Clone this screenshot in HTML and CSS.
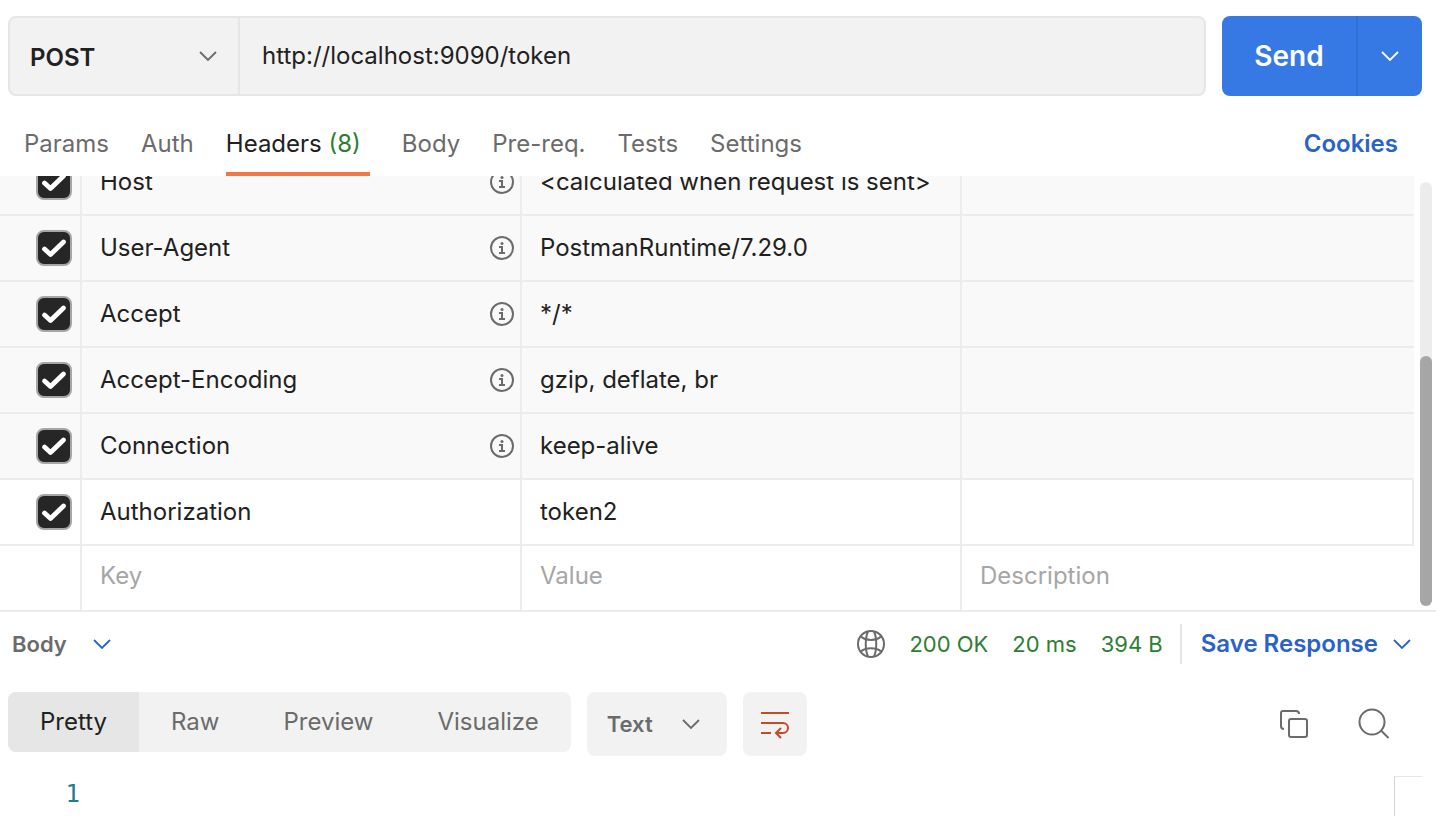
FILE: index.html
```html
<!DOCTYPE html>
<html lang="en">
<head>
    <meta charset="UTF-8">
    <meta name="viewport" content="width=device-width, initial-scale=1.0">
    <title>POST http://localhost:9090/token</title>
    <link rel="stylesheet" href="styles.css">
</head>
<body>
    <!-- Shared icons -->
    <svg class="icon-defs" aria-hidden="true">
        <symbol id="icon-chevron" viewBox="0 0 20 12">
            <path d="M2 2l8 8 8-8" fill="none" stroke="currentColor" stroke-width="1.8"/>
        </symbol>
        <symbol id="icon-check" viewBox="0 0 36 36">
            <path d="M8.500 19l6 5.500L27.500 12" fill="none" stroke="#fff" stroke-width="4.800" stroke-linecap="round" stroke-linejoin="round"/>
        </symbol>
        <symbol id="icon-info" viewBox="0 0 24 24">
            <circle cx="12" cy="12" r="11" fill="none" stroke="currentColor" stroke-width="2"/>
            <path d="M9 11h3v6M9 17h6" fill="none" stroke="currentColor" stroke-width="2"/>
            <circle cx="12" cy="7.500" r="1.500" fill="currentColor"/>
        </symbol>
    </svg>

    <form class="request-bar">
        <div class="url-group">
            <div class="dropdown method">
                <select aria-label="Method">
                    <option>POST</option>
                    <option>GET</option>
                    <option>PUT</option>
                </select>
                <svg class="chevron"><use href="#icon-chevron"/></svg>
            </div>
            <input type="text" class="url" aria-label="Request URL" value="http://localhost:9090/token">
        </div>
        <div class="send-group">
            <button type="button" class="send">Send</button>
            <button type="button" class="send-more" aria-label="More send options">
                <svg class="chevron"><use href="#icon-chevron"/></svg>
            </button>
        </div>
    </form>

    <nav class="tabs">
        <a href="#params">Params</a>
        <a href="#auth">Auth</a>
        <a href="#headers" class="active">Headers <span class="count">(8)</span></a>
        <a href="#body">Body</a>
        <a href="#prereq">Pre-req.</a>
        <a href="#tests">Tests</a>
        <a href="#settings">Settings</a>
        <a href="#cookies" class="cookies">Cookies</a>
    </nav>

    <div class="headers-panel">
        <table class="headers-table">
            <colgroup>
                <col class="col-check">
                <col class="col-key">
                <col class="col-value">
                <col>
            </colgroup>
            <tbody>
                <tr class="auto">
                    <td><label class="check"><input type="checkbox" aria-label="Host" checked><svg><use href="#icon-check"/></svg></label></td>
                    <td><div class="key">Host<svg class="info"><use href="#icon-info"/></svg></div></td>
                    <td>&lt;calculated when request is sent&gt;</td>
                    <td></td>
                </tr>
                <tr class="auto">
                    <td><label class="check"><input type="checkbox" aria-label="User-Agent" checked><svg><use href="#icon-check"/></svg></label></td>
                    <td><div class="key">User-Agent<svg class="info"><use href="#icon-info"/></svg></div></td>
                    <td>PostmanRuntime/7.29.0</td>
                    <td></td>
                </tr>
                <tr class="auto">
                    <td><label class="check"><input type="checkbox" aria-label="Accept" checked><svg><use href="#icon-check"/></svg></label></td>
                    <td><div class="key">Accept<svg class="info"><use href="#icon-info"/></svg></div></td>
                    <td>*/*</td>
                    <td></td>
                </tr>
                <tr class="auto">
                    <td><label class="check"><input type="checkbox" aria-label="Accept-Encoding" checked><svg><use href="#icon-check"/></svg></label></td>
                    <td><div class="key">Accept-Encoding<svg class="info"><use href="#icon-info"/></svg></div></td>
                    <td>gzip, deflate, br</td>
                    <td></td>
                </tr>
                <tr class="auto">
                    <td><label class="check"><input type="checkbox" aria-label="Connection" checked><svg><use href="#icon-check"/></svg></label></td>
                    <td><div class="key">Connection<svg class="info"><use href="#icon-info"/></svg></div></td>
                    <td>keep-alive</td>
                    <td></td>
                </tr>
                <tr class="custom">
                    <td><label class="check"><input type="checkbox" aria-label="Authorization" checked><svg><use href="#icon-check"/></svg></label></td>
                    <td>Authorization</td>
                    <td>token2</td>
                    <td></td>
                </tr>
                <tr class="new">
                    <td></td>
                    <td><input type="text" aria-label="Key" placeholder="Key"></td>
                    <td><input type="text" aria-label="Value" placeholder="Value"></td>
                    <td><input type="text" aria-label="Description" placeholder="Description"></td>
                </tr>
            </tbody>
        </table>
        <div class="scrollbar"><div class="thumb"></div></div>
    </div>

    <div class="response-bar">
        <div class="dropdown section">
            <select aria-label="Response section">
                <option>Body</option>
                <option>Cookies</option>
                <option>Headers</option>
            </select>
            <svg class="chevron"><use href="#icon-chevron"/></svg>
        </div>
        <div class="status">
            <svg class="globe" viewBox="0 0 28 28" fill="none" stroke="currentColor" stroke-width="2">
                <circle cx="14" cy="14" r="13"/>
                <path d="M11 1.500C8 8 8 20 11 26.500M17 1.500C20 8 20 20 17 26.500"/>
                <path d="M4 6.500C8 11 20 11 24 6.500M4 21.500C8 17 20 17 24 21.500"/>
            </svg>
            <span>200 OK</span>
            <span>20 ms</span>
            <span>394 B</span>
        </div>
        <button type="button" class="save">Save Response <svg class="chevron"><use href="#icon-chevron"/></svg></button>
    </div>

    <div class="view-bar">
        <div class="views">
            <button type="button" class="active">Pretty</button>
            <button type="button">Raw</button>
            <button type="button">Preview</button>
            <button type="button">Visualize</button>
        </div>
        <div class="dropdown format">
            <select aria-label="Format">
                <option>Text</option>
                <option>JSON</option>
                <option>HTML</option>
            </select>
            <svg class="chevron"><use href="#icon-chevron"/></svg>
        </div>
        <button type="button" class="wrap" aria-label="Wrap lines">
            <svg viewBox="0 0 32 32" fill="none" stroke="currentColor" stroke-width="2">
                <path d="M2 5h28M2 15h22a5 5 0 0 1 0 10h-7M2 25h10M22 20l-5 5 5 5"/>
            </svg>
        </button>
        <div class="tools">
            <button type="button" aria-label="Copy">
                <svg viewBox="0 0 32 32" fill="none" stroke="currentColor" stroke-width="2">
                    <path d="M6 21c-2 0-3-1-3-3V5c0-1.300.7-2 2-2h13c2 0 3 1 3 3"/>
                    <rect x="11" y="11" width="18" height="18" rx="2"/>
                </svg>
            </button>
            <button type="button" aria-label="Search">
                <svg viewBox="0 0 32 32" fill="none" stroke="currentColor" stroke-width="2">
                    <circle cx="14" cy="14" r="12.500"/>
                    <path d="M23 22.500l7.500 7.500"/>
                </svg>
            </button>
        </div>
    </div>

    <div class="editor">
        <span class="line-number">1</span>
        <div class="minimap"></div>
    </div>
</body>
</html>
```
FILE: styles.css
```css
* {
    box-sizing: border-box;
}
body {
    margin: 0;
    min-height: 100vh;
    display: flex;
    flex-direction: column;
    overflow: hidden;
    font-family: Inter, sans-serif;
    font-size: 24px;
    line-height: 32px;
    color: #212121;
    background-color: #fff;
}
button, input, select {
    font: inherit;
    color: inherit;
    margin: 0;
    padding: 0;
    border: none;
    background: none;
}
button {
    cursor: pointer;
}
a {
    text-decoration: none;
}
svg {
    display: block;
}
.icon-defs {
    display: none;
}
.chevron {
    width: 20px;
    height: 12px;
    flex: none;
}
.dropdown {
    position: relative;
    display: flex;
    font-weight: 600;
}
.dropdown select {
    appearance: none;
    width: 100%;
    cursor: pointer;
}
.dropdown .chevron {
    position: absolute;
    top: 50%;
    right: 20px;
    margin-top: -6px;
    pointer-events: none;
}

/* Request line */
.request-bar {
    display: flex;
    gap: 16px;
    padding: 16px 14px 16px 8px;
}
.url-group {
    flex: 1;
    display: flex;
    height: 80px;
    background-color: #f2f2f2;
    border: 2px solid #e6e6e6;
    border-radius: 8px;
}
.method {
    width: 230px;
    border-right: 2px solid #e6e6e6;
}
.method select {
    padding: 4px 0 0 20px;
}
.method .chevron {
    color: #6b6b6b;
}
.url {
    flex: 1;
    min-width: 0;
    padding: 0 22px;
}
.send-group {
    display: flex;
    width: 200px;
    color: #fff;
    background-color: #3679e4;
    border-radius: 8px;
}
.send {
    flex: 1;
    font-size: 28px;
    font-weight: 600;
}
.send-more {
    display: flex;
    align-items: center;
    justify-content: center;
    width: 66px;
    border-left: 2px solid #306fd5;
}

/* Request tabs */
.tabs {
    display: flex;
    gap: 32px;
    padding: 0 38px 0 24px;
}
.tabs a {
    height: 64px;
    padding-top: 16px;
    color: #6b6b6b;
}
.tabs .active {
    padding-right: 9px;
    color: #212121;
    border-bottom: 4px solid #f27747;
}
.tabs .count {
    color: #2e7d32;
}
.tabs .cookies {
    margin-left: auto;
    color: #2a62cb;
    font-weight: 600;
}

/* Headers list, scrolled to its end */
.headers-panel {
    display: flex;
    align-items: flex-end;
    height: 436px;
    overflow: hidden;
    border-bottom: 2px solid #ececec;
}
.headers-table {
    flex: 1;
    table-layout: fixed;
    border-collapse: separate;
    border-spacing: 0;
}
.col-check {
    width: 82px;
}
.col-key, .col-value {
    width: 440px;
}
.headers-table td {
    height: 66px;
    padding: 0 18px;
    border-right: 2px solid #ececec;
    border-bottom: 2px solid #ececec;
}
.headers-table td:first-child {
    padding: 0 8px 0 36px;
}
.headers-table .auto td {
    background-color: #f9f9f9;
}
.headers-table .auto td:last-child,
.headers-table .new td:last-child {
    border-right: none;
}
.headers-table .new td {
    height: 64px;
    padding-bottom: 4px;
    border-bottom: none;
}
.headers-table input[type="text"] {
    display: block;
    width: 100%;
}
.headers-table ::placeholder {
    color: #a6a6a6;
}
.check {
    position: relative;
    display: block;
    width: 36px;
    height: 36px;
}
.check input {
    appearance: none;
    display: block;
    width: 36px;
    height: 36px;
    border: 2px solid #a6a6a6;
    border-radius: 8px;
    background-color: #fff;
}
.check input:checked {
    background-color: #262626;
}
.check svg {
    position: absolute;
    top: 0;
    left: 0;
    width: 36px;
    height: 36px;
    pointer-events: none;
}
.key {
    display: flex;
    align-items: center;
    justify-content: space-between;
    margin-right: -12px;
}
.info {
    width: 24px;
    height: 24px;
    color: #6b6b6b;
}
.scrollbar {
    display: flex;
    align-items: flex-end;
    width: 12px;
    height: 424px;
    margin: 0 4px 4px 6px;
    border-radius: 6px;
    background-color: #ececec;
}
.thumb {
    width: 100%;
    height: 250px;
    border-radius: 6px;
    background-color: #a6a6a6;
}

/* Response status */
.response-bar {
    display: flex;
    align-items: center;
    height: 64px;
    padding: 0 24px 0 12px;
}
.section {
    width: 100px;
    margin-right: auto;
    font-size: 22px;
    color: #6b6b6b;
}
.section .chevron {
    right: 0;
    color: #2a62cb;
}
.status {
    display: flex;
    align-items: center;
    gap: 24px;
    height: 40px;
    padding-right: 17px;
    border-right: 2px solid #e6e6e6;
    font-size: 22px;
    color: #2e7d32;
}
.globe {
    width: 28px;
    height: 28px;
    color: #6b6b6b;
}
.save {
    display: flex;
    align-items: center;
    gap: 14px;
    padding-left: 19px;
    font-weight: 600;
    color: #2a62cb;
}

/* Response view controls */
.view-bar {
    display: flex;
    align-items: flex-start;
    gap: 16px;
    padding: 16px 46px 20px 8px;
}
.views {
    display: flex;
    height: 60px;
    overflow: hidden;
    border-radius: 8px;
    background-color: #f2f2f2;
    color: #6b6b6b;
}
.views button {
    padding: 0 32px;
}
.views .active {
    color: #212121;
    background-color: #e6e6e6;
}
.format {
    width: 140px;
    height: 64px;
    border-radius: 8px;
    background-color: #f2f2f2;
    font-size: 22px;
    color: #6b6b6b;
}
.format select {
    padding-left: 20px;
}
.format .chevron {
    right: 26px;
}
.wrap {
    display: flex;
    align-items: center;
    justify-content: center;
    width: 64px;
    height: 64px;
    border-radius: 8px;
    background-color: #f2f2f2;
    color: #c64a22;
}
.wrap svg, .tools svg {
    width: 32px;
    height: 32px;
}
.tools {
    display: flex;
    align-items: center;
    gap: 48px;
    height: 64px;
    margin-left: auto;
    color: #6b6b6b;
}

/* Response text */
.editor {
    flex: 1;
    display: flex;
    justify-content: space-between;
    padding-right: 14px;
}
.line-number {
    width: 80px;
    padding-top: 2px;
    text-align: right;
    font-family: "DejaVu Sans Mono", monospace;
    color: #237893;
}
.minimap {
    width: 28px;
    border-top: 1px solid #e6e6e6;
    border-left: 1px solid #d4d4d4;
}
```
